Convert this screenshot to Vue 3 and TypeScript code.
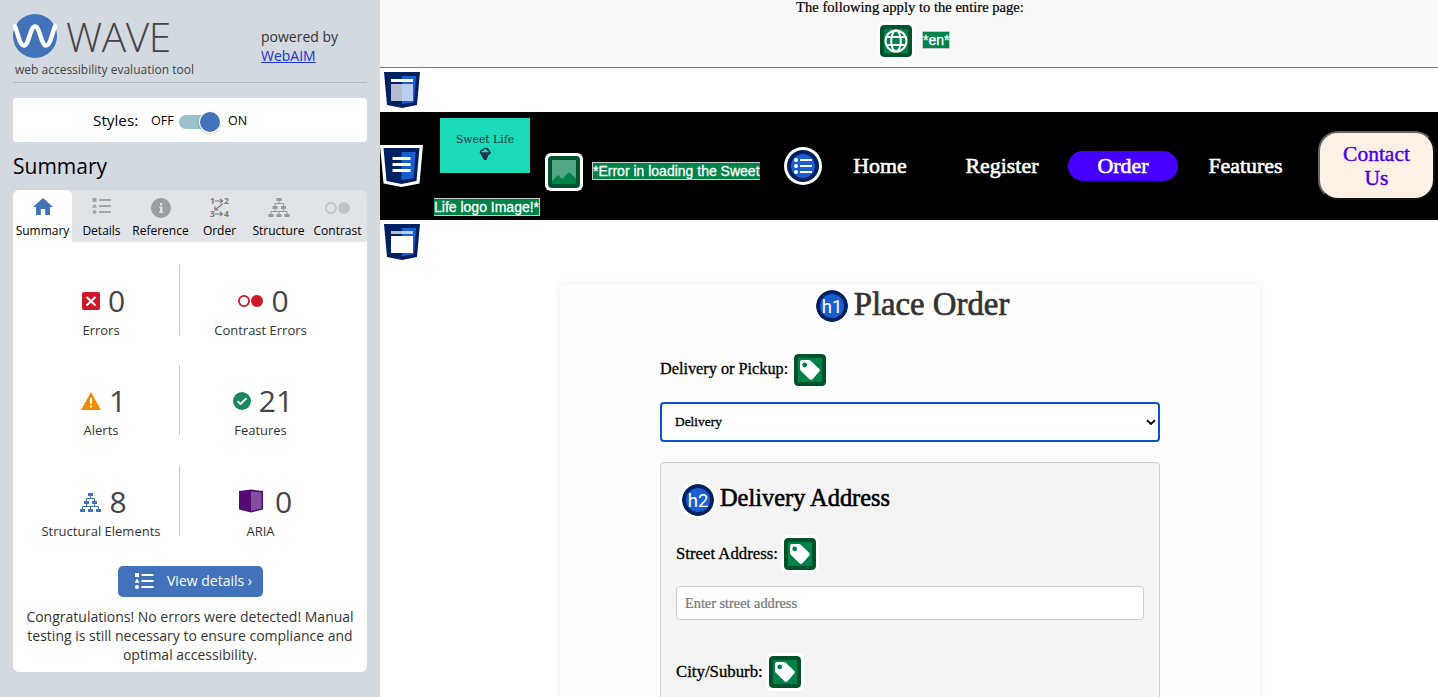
<script setup lang="ts">
interface Stat {
  icon: string
  value: number
  label: string
}

const tabs: { icon: string; label: string }[] = [
  { icon: 'home', label: 'Summary' },
  { icon: 'list', label: 'Details' },
  { icon: 'info', label: 'Reference' },
  { icon: 'order', label: 'Order' },
  { icon: 'tree', label: 'Structure' },
  { icon: 'contrast', label: 'Contrast' },
]

const stats: Stat[] = [
  { icon: 'error', value: 0, label: 'Errors' },
  { icon: 'contrast', value: 0, label: 'Contrast Errors' },
  { icon: 'alert', value: 1, label: 'Alerts' },
  { icon: 'feature', value: 21, label: 'Features' },
  { icon: 'tree', value: 8, label: 'Structural Elements' },
  { icon: 'aria', value: 0, label: 'ARIA' },
]

const navItems = ['Home', 'Register', 'Order', 'Features']
</script>

<template>
  <div class="app">
    <aside class="sidebar">
      <header class="brand">
        <div class="brand-main">
          <div class="brand-row">
            <svg class="brand-logo" width="44" height="44" viewBox="0 0 44 44">
              <circle cx="22" cy="22" r="22" fill="#4272b9" />
              <path d="M1 10.500C5 17 6 31.500 11 31.500S17 12.500 22 12.500S28 31.500 33 31.500S39 17 43 10.500" fill="none" stroke="#fff" stroke-width="4.400" />
            </svg>
            <span class="brand-name">WAVE</span>
          </div>
          <div class="tagline">web accessibility evaluation tool</div>
        </div>
        <div class="powered">powered by<br /><a href="#">WebAIM</a></div>
      </header>

      <div class="styles-box">
        <span class="styles-label">Styles:</span>
        <span class="off">OFF</span>
        <span class="switch"><span class="knob"></span></span>
        <span class="on">ON</span>
      </div>

      <h2 class="section-title">Summary</h2>

      <nav class="tabs">
        <div v-for="(tab, i) in tabs" :key="tab.label" class="tab" :class="{ active: i === 0 }">
          <svg v-if="tab.icon === 'home'" width="32" height="22" viewBox="0 0 32 22">
            <path d="M16 2L6 11H9V19H13.800V13H18.200V19H23V11H26Z" fill="#4272b9" />
          </svg>
          <svg v-else-if="tab.icon === 'list'" width="32" height="22" viewBox="0 0 32 22" fill="#a3a5a9">
            <path d="M6.500 2h4v4h-4zM13 3h12v2H13zM13 9h12v2H13zM13 15h12v2H13zM8.500 7.500l2.500 4.300h-5z" /><circle cx="8.500" cy="16" r="2" />
          </svg>
          <svg v-else-if="tab.icon === 'info'" width="32" height="22" viewBox="0 0 32 22">
            <circle cx="16" cy="12" r="10" fill="#9b9da1" />
            <path d="M15 7h2.300v2.200H15zM14 10.500h3.300v5.200h1V17h-4.300v-1.300h1v-3.900h-1z" fill="#e0e3e8" />
          </svg>
          <svg v-else-if="tab.icon === 'order'" class="order-icon" width="32" height="22" viewBox="0 0 32 22">
            <text x="6" y="8">1</text><text x="20" y="8">2</text><text x="6" y="21">3</text><text x="20" y="21">4</text>
            <path d="M11 5H18M16 3L18.500 5L16 7M11 18H18M16 16L18.500 18L16 20M19 7.500L11 14M11 10.500V14H14.500" fill="none" stroke="#77797c" stroke-width="1.200" />
          </svg>
          <svg v-else-if="tab.icon === 'tree'" width="32" height="22" viewBox="0 0 32 22">
            <path d="M13.500 2h5v3h-5zM9.500 10h5v3h-5zM18 10h5v3h-5zM5.500 18h5v3h-5zM13.500 18h5v3h-5zM21.500 18h5v3h-5z" fill="#96989c" />
            <path d="M16 5V7.500M12 10V7.500H20.500V10M12 13V15.500M20.500 13V15.500M8 18V15.500H24V18M16 15.500V18" fill="none" stroke="#96989c" stroke-width="1" />
          </svg>
          <svg v-else width="32" height="22" viewBox="0 0 32 22">
            <circle cx="9" cy="12" r="5.100" fill="none" stroke="#c0c2c5" stroke-width="1.700" /><circle cx="22" cy="12" r="6" fill="#bfc1c4" />
          </svg>
          <span>{{ tab.label }}</span>
        </div>
      </nav>

      <section class="panel">
        <div class="stats">
          <div v-for="s in stats" :key="s.label" class="stat">
            <div class="stat-row" :class="s.icon">
              <svg v-if="s.icon === 'error'" width="18" height="18" viewBox="0 0 18 18">
                <rect width="18" height="18" rx="2" fill="#ce1827" /><path d="M4.500 5L13.500 13.500M13.500 5L4.500 13.500" stroke="#fff" stroke-width="2" />
              </svg>
              <svg v-else-if="s.icon === 'contrast'" width="25" height="18" viewBox="0 0 25 18">
                <circle cx="6" cy="9" r="5.100" fill="none" stroke="#ce1827" stroke-width="1.800" /><circle cx="19" cy="9" r="6" fill="#ce1827" />
              </svg>
              <svg v-else-if="s.icon === 'alert'" width="20" height="18" viewBox="0 0 20 18">
                <path d="M10 0L20 18H0Z" fill="#f28b00" /><path d="M9 6h2v6H9zM9 13.500h2v2H9z" fill="#fff" />
              </svg>
              <svg v-else-if="s.icon === 'feature'" width="18" height="18" viewBox="0 0 18 18">
                <circle cx="9" cy="9" r="9" fill="#1a8763" /><path d="M4.500 9.200L7.500 12L13.500 6.300" fill="none" stroke="#fff" stroke-width="2" />
              </svg>
              <svg v-else-if="s.icon === 'tree'" width="21" height="19" viewBox="0 0 21 19">
                <path d="M8 0h5v3H8zM4 8h5v3H4zM12 8h5v3h-5zM0 16h5v3H0zM8 16h5v3H8zM16 16h5v3h-5z" fill="#4272b9" />
                <path d="M10.500 3V5.500M6.500 8V5.500H14.500V8M6.500 11V13.500M14.500 11V13.500M2.500 16V13.500H18.500V16M10.500 13.500V16" fill="none" stroke="#4272b9" />
              </svg>
              <svg v-else width="24" height="24" viewBox="0 0 24 24">
                <path d="M0 2L12 .5L24 2V20.500L12 23.500L0 20.500Z" fill="#520c74" /><path d="M12 2.500L22.500 3.500V19.500L12 22Z" fill="#874ea0" />
              </svg>
              <span class="num">{{ s.value }}</span>
            </div>
            <div class="stat-label">{{ s.label }}</div>
          </div>
        </div>
        <button class="details-btn" type="button">
          <svg width="19" height="16" viewBox="0 0 19 16" fill="#fff">
            <path d="M0 0h4v4H0zM6.500 1h12v2h-12zM6.500 7h12v2h-12zM6.500 13h12v2h-12zM2 5.500l2.500 4.300h-5z" /><circle cx="2" cy="14" r="2" />
          </svg>
          <span>View details ›</span>
        </button>
        <p class="message">Congratulations! No errors were detected! Manual testing is still necessary to ensure compliance and optimal accessibility.</p>
      </section>
    </aside>

    <main class="page">
      <div class="page-info">
        <div class="info-text">The following apply to the entire page:</div>
        <div class="info-row">
          <svg class="badge" width="32" height="32" viewBox="0 0 32 32">
            <rect width="32" height="32" rx="4" fill="#00522a" /><rect x="4" y="4" width="24" height="24" fill="#008248" />
            <g fill="none" stroke="#fff" stroke-width="2"><circle cx="16" cy="16" r="10.500" /><ellipse cx="16" cy="16" rx="4.800" ry="10.500" /><path d="M7 12H25M7 20H25" /></g>
          </svg>
          <span class="tag">*en*</span>
        </div>
      </div>

      <div class="landmark">
        <svg width="36" height="36" viewBox="0 0 36 36">
          <path d="M0 0H36L33 33L18 36L3 33Z" fill="#00205f" /><path d="M18 4H32L30 30.300L18 32Z" fill="#1a5fd0" />
          <path d="M7 7h22v3H7z" fill="#fff" /><path d="M7 12h22v17H7z" fill="#fff" opacity=".7" />
        </svg>
      </div>

      <header class="site-header">
        <svg class="nav-mark" width="43" height="42" viewBox="0 0 43 42">
          <path d="M0 0H43L39.500 38.500L21.500 42L3.500 38.500Z" fill="#fff" />
          <path d="M3.500 3H39.500L36.500 36L21.500 39L6.500 36Z" fill="#00205f" /><path d="M21.500 7H35.500L33.500 33.300L21.500 35Z" fill="#1a5fd0" />
          <path d="M12.500 12h18v3h-18zM12.500 18h18v3h-18zM12.500 24h18v3h-18z" fill="#fff" />
        </svg>
        <div class="logo-area">
          <div class="logo-row">
            <div class="site-logo">
              <span>Sweet Life</span>
              <svg width="12" height="14" viewBox="0 0 12 14">
                <path d="M1.500 6Q1 3.500 4 3Q6 0 8 2.500L9 1M8 2.500Q11 3 10.500 6M1 6H11L9.500 7.500M2 7.500H7" fill="none" stroke="#203047" stroke-width="1.400" />
                <path d="M2.500 8.500L10 6.500L7.500 13H5Z" fill="#203047" />
              </svg>
            </div>
            <svg class="image-badge" width="38" height="38" viewBox="0 0 38 38">
              <rect width="38" height="38" rx="6" fill="#fff" /><rect x="3" y="3" width="32" height="32" rx="4" fill="#00522a" />
              <rect x="7" y="7" width="24" height="24" fill="#4fa883" /><path d="M7 28L13 22L17 26L24 19L31 25.500V31H7Z" fill="#008248" />
            </svg>
            <span class="tag open-right">*Error in loading the Sweet</span>
          </div>
          <span class="tag open-left">Life logo Image!*</span>
        </div>
        <svg class="list-badge" width="38" height="38" viewBox="0 0 38 38">
          <circle cx="19" cy="19" r="19" fill="#fff" /><circle cx="19" cy="19" r="16" fill="#00205f" /><circle cx="19" cy="19" r="12" fill="#1a5fd0" />
          <g fill="#fff"><circle cx="12" cy="13" r="2" /><circle cx="12" cy="19" r="2" /><circle cx="12" cy="25" r="2" /><path d="M16 12h12v2H16zM16 18h12v2H16zM16 24h12v2H16z" /></g>
        </svg>
        <nav class="site-nav">
          <a v-for="item in navItems" :key="item" :class="[item.toLowerCase(), { current: item === 'Order' }]">{{ item }}</a>
        </nav>
        <button class="contact" type="button">Contact<br />Us</button>
      </header>

      <div class="landmark">
        <svg width="36" height="36" viewBox="0 0 36 36">
          <path d="M0 0H36L33 33L18 36L3 33Z" fill="#00205f" /><path d="M18 4H32L30 30.300L18 32Z" fill="#1a5fd0" />
          <path d="M7 7h22v3H7z" fill="#fff" opacity=".7" /><path d="M7 12h22v17H7z" fill="#fff" />
        </svg>
      </div>

      <section class="card">
        <h1 class="title">
          <svg class="heading-badge" width="32" height="32" viewBox="0 0 32 32">
            <circle cx="16" cy="16" r="16" fill="#00205f" /><circle cx="16" cy="16" r="12" fill="#1a5fd0" /><text x="16" y="22.800">h1</text>
          </svg>
          <span>Place Order</span>
        </h1>
        <div class="field-label first">
          <span class="pickup">Delivery or Pickup:</span>
          <svg class="badge" width="32" height="32" viewBox="0 0 32 32">
            <rect width="32" height="32" rx="4" fill="#00522a" /><rect x="4" y="4" width="24" height="24" fill="#008248" />
            <path fill-rule="evenodd" d="M8 6H14.500Q16 6 17 7L25.300 15Q26.500 16.300 25.300 17.500L18.500 25.300Q17 26.700 15.500 25.300L7 17Q6 16 6 14.500V8Q6 6 8 6ZM10.700 8.500a2.400 2.400 0 1 0 .01 0Z" fill="#fff" />
          </svg>
        </div>
        <div class="select">
          <span>Delivery</span>
          <svg width="10" height="7" viewBox="0 0 10 7"><path d="M1 1.300L5 5L9 1.300" fill="none" stroke="#000" stroke-width="2" /></svg>
        </div>
        <div class="fieldset">
          <h2 class="subtitle">
            <svg class="heading-badge outlined" width="32" height="32" viewBox="0 0 32 32">
              <circle cx="16" cy="16" r="16" fill="#00205f" /><circle cx="16" cy="16" r="12" fill="#1a5fd0" /><text x="16" y="22.800">h2</text>
            </svg>
            <span>Delivery Address</span>
          </h2>
          <div class="field-label street">
            <span class="label-text">Street Address:</span>
            <svg class="badge" width="32" height="32" viewBox="0 0 32 32">
              <rect width="32" height="32" rx="4" fill="#00522a" /><rect x="4" y="4" width="24" height="24" fill="#008248" />
              <path fill-rule="evenodd" d="M8 6H14.500Q16 6 17 7L25.300 15Q26.500 16.300 25.300 17.500L18.500 25.300Q17 26.700 15.500 25.300L7 17Q6 16 6 14.500V8Q6 6 8 6ZM10.700 8.500a2.400 2.400 0 1 0 .01 0Z" fill="#fff" />
            </svg>
          </div>
          <div class="input">Enter street address</div>
          <div class="field-label city">
            <span class="label-text">City/Suburb:</span>
            <svg class="badge" width="32" height="32" viewBox="0 0 32 32">
              <rect width="32" height="32" rx="4" fill="#00522a" /><rect x="4" y="4" width="24" height="24" fill="#008248" />
              <path fill-rule="evenodd" d="M8 6H14.500Q16 6 17 7L25.300 15Q26.500 16.300 25.300 17.500L18.500 25.300Q17 26.700 15.500 25.300L7 17Q6 16 6 14.500V8Q6 6 8 6ZM10.700 8.500a2.400 2.400 0 1 0 .01 0Z" fill="#fff" />
            </svg>
          </div>
        </div>
      </section>
    </main>
  </div>
</template>

<style>
body {
  margin: 0;
  overflow: hidden;
}
</style>

<style scoped>
* {
  box-sizing: border-box;
}
svg {
  display: block;
  flex: none;
}
.app {
  display: flex;
  width: 1438px;
  height: 697px;
  overflow: hidden;
  background: #fff;
}
.sidebar {
  flex: none;
  width: 380px;
  padding: 0 13px;
  background: #d2d9e0;
  font-family: "Open Sans", "Noto Sans", sans-serif;
  color: #000;
}
.brand {
  display: flex;
  justify-content: space-between;
  height: 83px;
  border-bottom: 1px solid #b4b6c0;
}
.brand-row {
  display: flex;
  gap: 9px;
  padding-top: 14px;
  height: 58px;
}
.brand-name {
  height: 44px;
  font-size: 40.500px;
  font-weight: 300;
  line-height: 45px;
  color: #444;
  letter-spacing: -0.4px;
}
.tagline {
  padding-left: 2px;
  font-size: 12px;
  line-height: 16px;
  margin-top: 4px;
  color: #444;
  white-space: nowrap;
}
.powered {
  width: 106px;
  padding-top: 27px;
  font-size: 14px;
  line-height: 19px;
  color: #333;
}
.powered a {
  color: #1a35d0;
}
.styles-box {
  display: flex;
  align-items: center;
  height: 44px;
  margin-top: 15px;
  padding-left: 80px;
  border-radius: 4px;
  background: #fff;
  font-size: 12.5px;
}
.styles-label {
  width: 58px;
  font-size: 15.300px;
}
.off {
  width: 28px;
}
.switch {
  display: flex;
  align-items: center;
  justify-content: flex-end;
  width: 41px;
  height: 14px;
  margin-top: 3px;
  border-radius: 7px;
  background: #99c2cd;
}
.knob {
  width: 20px;
  height: 20px;
  border-radius: 50%;
  background: #4272b9;
  box-shadow: 0 0 0 1px #fff, 0 1px 3px rgba(0, 0, 0, 0.5);
}
.on {
  margin-left: 8px;
}
.section-title {
  margin: 10px 0 0;
  height: 38px;
  font-size: 21px;
  font-weight: 400;
  line-height: 29px;
}
.tabs {
  display: flex;
  height: 52px;
  border-radius: 6px 6px 0 0;
  background: #e0e3e8;
}
.tab {
  display: flex;
  flex: none;
  flex-direction: column;
  align-items: center;
  width: 59px;
  padding-top: 6px;
  border-radius: 6px 6px 0 0;
  font-size: 12px;
  line-height: 16px;
  white-space: nowrap;
}
.tab span {
  margin-top: 5px;
}
.tab.active {
  background: #fff;
}
.order-icon text {
  font-size: 8.500px;
  font-weight: 700;
  fill: #77797c;
}
.panel {
  height: 430px;
  padding: 23px 0 0;
  border-radius: 0 0 6px 6px;
  background: #fff;
}
.stats {
  display: grid;
  grid-template-columns: 159px 161px;
  grid-template-rows: 100px 101px 100px;
  padding-left: 8px;
  height: 301px;
}
.stat {
  height: 70px;
}
.stat:nth-child(odd) {
  padding-left: 2px;
  border-right: 1px solid #c6c6c6;
}
.stat-row {
  display: flex;
  align-items: center;
  justify-content: center;
  gap: 8px;
  height: 56px;
  padding: 16px 0 0 5px;
}
.stat-row.aria {
  gap: 12px;
  padding: 14px 0 0 10px;
}
.stat-row.aria .num {
  margin-top: 2px;
}
.stat-row.contrast {
  padding-left: 6px;
}
.num {
  font-size: 30px;
  line-height: 40px;
  color: #444;
}
.stat-label {
  font-size: 13px;
  line-height: 18px;
  text-align: center;
  color: #333;
  white-space: nowrap;
}
.details-btn {
  display: flex;
  align-items: center;
  gap: 13px;
  width: 145px;
  height: 31px;
  margin: 0 0 0 105px;
  padding: 0 0 2px 17px;
  border: 0;
  border-radius: 5px;
  background: #4272b9;
  color: #fff;
  font-family: inherit;
  font-size: 14px;
  white-space: nowrap;
}
.message {
  margin: 10px 10px 0;
  font-size: 14px;
  line-height: 19px;
  text-align: center;
  color: #333;
}

.page {
  flex: 1;
  min-width: 0;
  background: #fff;
  font-family: "Liberation Serif", serif;
  color: #000;
}
.page-info {
  height: 68px;
  border-bottom: 1px solid #6f7f71;
  background: #f9f9f9;
  text-align: center;
}
.info-text {
  height: 25px;
  padding-left: 2px;
  font-size: 14.600px;
  line-height: 15px;
  -webkit-text-stroke: 0.2px #000;
}
.info-row {
  display: flex;
  align-items: center;
  gap: 10px;
  padding-left: 500px;
}
.info-row .tag {
  margin-top: -2px;
}
.badge {
  border-radius: 4px;
  box-shadow: 0 0 0 3px #fff;
}
.tag {
  flex: none;
  height: 18px;
  border: 1px solid #c3cfc8;
  background: #008248;
  color: #fff;
  font-family: "Liberation Sans", sans-serif;
  font-size: 14px;
  line-height: 17px;
  white-space: nowrap;
  -webkit-text-stroke: 0.3px #fff;
}
.tag.open-right {
  border-right: 0;
  width: 168px;
}
.tag.open-left {
  display: block;
  width: 106px;
  border-left: 0;
}
.landmark {
  height: 44px;
  padding: 4px;
}
.site-header {
  display: flex;
  align-items: center;
  height: 108px;
  background: #000;
}
.nav-mark {
  margin-left: 0.400px;
  margin-right: 0.600px;
}
.logo-area {
  width: 350px;
  height: 108px;
  padding: 6px 0 0 10px;
}
.logo-row {
  display: flex;
  height: 80px;
  padding-left: 6px;
}
.site-logo {
  display: flex;
  flex-direction: column;
  align-items: center;
  width: 90px;
  height: 55px;
  padding-top: 14px;
  background: #1bdbb8;
  color: #203047;
  font-family: "DejaVu Serif", serif;
  font-size: 10.800px;
  line-height: 15px;
}
.image-badge {
  margin: 35px 9px 0 15px;
}
.logo-row .tag {
  margin-top: 44px;
}
.list-badge {
  margin-left: 10px;
}
.site-nav {
  display: flex;
  margin-left: 2px;
  font-size: 21.900px;
  line-height: 30px;
  text-align: center;
  color: #fff;
  -webkit-text-stroke: 0.6px #fff;
}
.home {
  width: 112px;
}
.register {
  width: 132px;
}
.order {
  width: 110px;
}
.features {
  width: 135px;
}
.current {
  border-radius: 15px;
  background: #4600ff;
}
.contact {
  width: 117px;
  height: 69px;
  margin: -1px 0 0 5px;
  padding: 0;
  border: 2px outset #666;
  border-radius: 20px;
  background: #fdf0e4;
  color: #4600f0;
  font-family: inherit;
  font-size: 21.500px;
  line-height: 24px;
  -webkit-text-stroke: 0.4px #4600f0;
}
.card {
  width: 700px;
  height: 500px;
  margin: 20px 0 0 180px;
  padding: 6px 100px 0;
  border-radius: 5px;
  background: #fefefe;
  box-shadow: 0 0 8px rgba(0, 0, 0, 0.07);
}
.title {
  display: flex;
  justify-content: center;
  gap: 6px;
  margin: 0;
  padding-left: 5px;
  height: 64px;
  font-size: 32.800px;
  font-weight: 400;
  line-height: 28px;
  color: #333;
  -webkit-text-stroke: 0.7px #333;
}
.heading-badge {
  border-radius: 50%;
  -webkit-text-stroke: 0;
}
.heading-badge text {
  font-family: Roboto, sans-serif;
  font-size: 18.500px;
  font-weight: 400;
  text-anchor: middle;
  fill: #fff;
}
.outlined {
  box-shadow: 0 0 0 3px #fff;
}
.field-label {
  display: flex;
  gap: 6px;
  height: 48px;
  font-size: 16.750px;
  line-height: 31px;
  white-space: nowrap;
  -webkit-text-stroke: 0.3px #000;
}
.pickup {
  width: 128px;
  font-size: 16.250px;
}
.select {
  display: flex;
  align-items: center;
  justify-content: space-between;
  height: 40px;
  padding: 0 2px 0 13px;
  border: 2px solid #0b53ce;
  border-radius: 4px;
  background: #fff;
  font-size: 13.400px;
  -webkit-text-stroke: 0.3px #000;
}
.fieldset {
  height: 300px;
  margin-top: 20px;
  padding: 21px 15px 0;
  border: 1px solid #ccc;
  border-radius: 4px;
  background: #f4f4f4;
}
.subtitle {
  display: flex;
  gap: 6px;
  height: 54px;
  margin: 0;
  padding-left: 6px;
  font-size: 24.400px;
  font-weight: 400;
  line-height: 28px;
  -webkit-text-stroke: 0.6px #000;
}
.city {
  margin-top: 36px;
}
.city .label-text {
  font-size: 16.800px;
}
.input {
  height: 34px;
  padding-left: 8px;
  border: 1px solid #ccc;
  border-radius: 4px;
  background: #fff;
  color: #757575;
  font-size: 14.300px;
  line-height: 32px;
  -webkit-text-stroke: 0.2px #757575;
}
</style>
